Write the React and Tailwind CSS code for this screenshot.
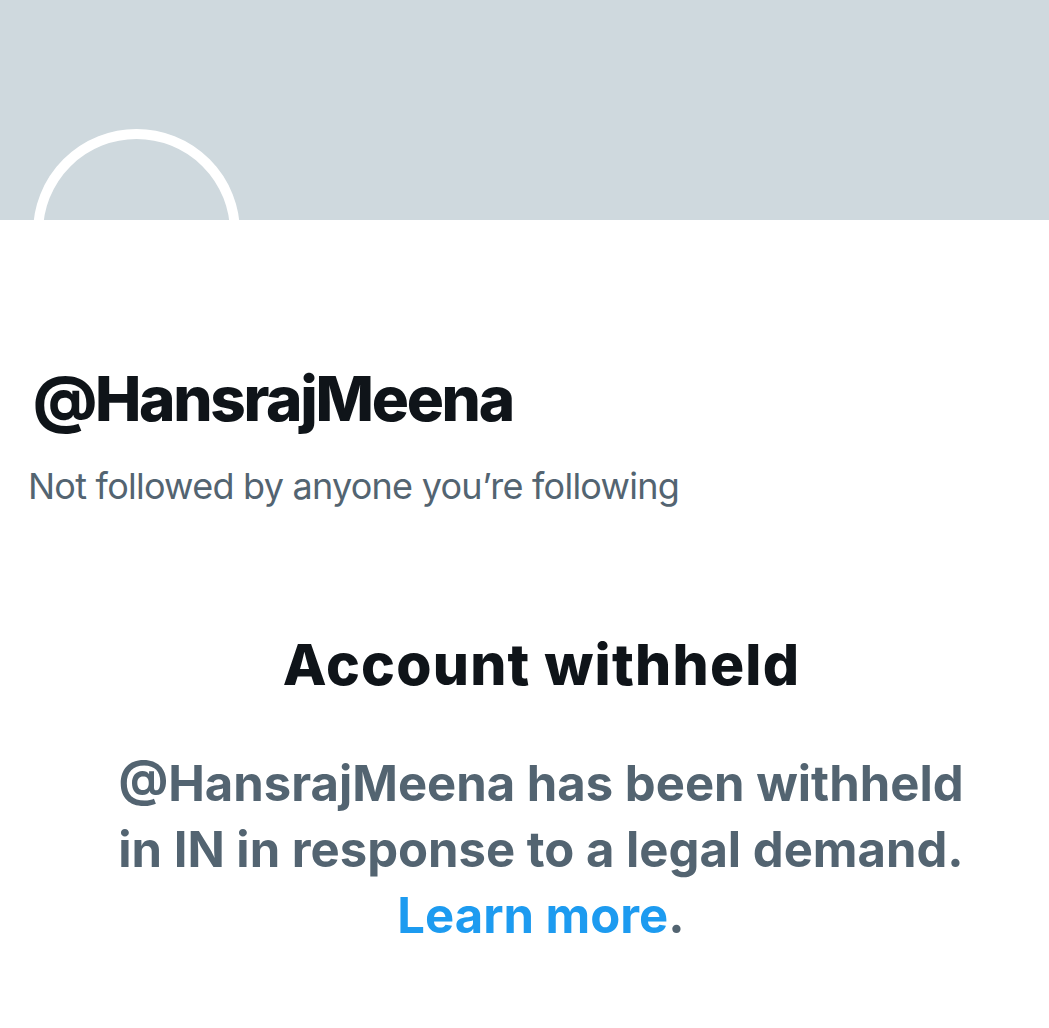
export default function App() {
  return (
    <div
      className="min-h-screen w-full bg-white"
      style={{ fontFamily: 'Inter, "Noto Sans", sans-serif' }}
    >
      {/* banner */}
      <div className="relative h-[220px] w-full bg-[#cfd9de]">
        <div className="absolute left-[33px] top-[129px] h-[207px] w-[207px] rounded-full border-[10px] border-white" />
      </div>

      <div className="pl-[33px]">
        {/* profile */}
        <div className="mt-[148px]">
          <h2 className="text-[62px] font-extrabold leading-[62px] tracking-[-2.3px] text-[#0f1419]">
            @HansrajMeena
          </h2>
          <p className="-ml-[5px] mt-[34px] text-[36px] leading-[44px] tracking-[-0.75px] text-[#536471]">
            Not followed by anyone you’re following
          </p>
        </div>

        {/* withheld notice */}
        <div className="mt-[125px] text-center">
          <h1 className="pl-[1px] text-[57px] font-extrabold leading-[64px] tracking-[1.2px] text-[#0f1419]">
            Account withheld
          </h1>
          <p className="mt-[54px] text-[49px] font-bold leading-[66px] text-[#536471]">
            @HansrajMeena has been withheld
            <br />
            in IN in response to a legal demand.
            <br />
            <span className="text-[#1d9bf0]">Learn more</span>.
          </p>
        </div>
      </div>
    </div>
  )
}
